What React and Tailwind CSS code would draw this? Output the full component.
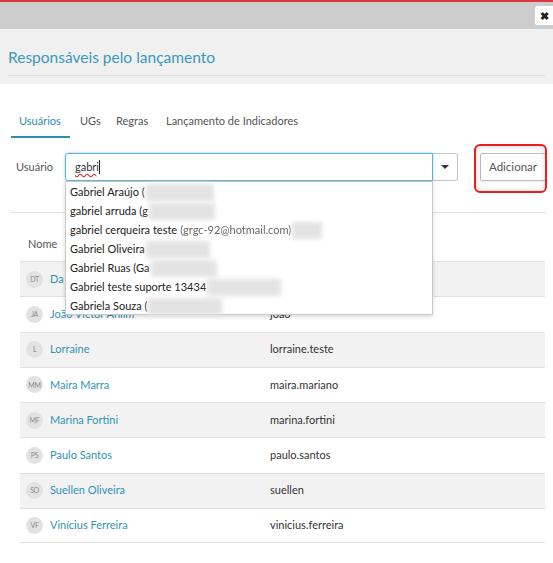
import React from 'react';

const users = [
  { ini: 'DT', name: 'Da', login: '' },
  { ini: 'JA', name: 'João Victor Aniim', login: 'joao' },
  { ini: 'L', name: 'Lorraine', login: 'lorraine.teste' },
  { ini: 'MM', name: 'Maira Marra', login: 'maira.mariano' },
  { ini: 'MF', name: 'Marina Fortini', login: 'marina.fortini' },
  { ini: 'PS', name: 'Paulo Santos', login: 'paulo.santos' },
  { ini: 'SO', name: 'Suellen Oliveira', login: 'suellen' },
  { ini: 'VF', name: 'Vinícius Ferreira', login: 'vinicius.ferreira' },
];

const options = [
  { text: 'Gabriel Araújo (', blur: 'w-[68px]' },
  { text: 'gabriel arruda (g', blur: 'w-[66px]' },
  { text: 'gabriel cerqueira teste', extra: '(grgc-92@hotmail.com)', blur: 'w-[30px]' },
  { text: 'Gabriel Oliveira', blur: 'w-[64px]' },
  { text: 'Gabriel Ruas (Ga', blur: 'w-[66px]' },
  { text: 'Gabriel teste suporte 13434', blur: 'w-[74px]' },
  { text: 'Gabriela Souza (', blur: 'w-[74px]' },
];

export default function App() {
  return (
    <div className="w-[553px] h-[563px] bg-white overflow-hidden text-[#333] font-['Lato','Open_Sans',sans-serif]">
      <div className="h-[2px] bg-[#d9363e]" />
      <div className="h-[27px] bg-[#cccccc] flex justify-end items-start pt-[4px]">
        <button className="w-[18px] h-[19px] bg-white rounded-l-[2px] flex items-center justify-center text-[11px] leading-none text-[#222] font-bold">
          ✖
        </button>
      </div>

      <div className="bg-[#f0f0f0] px-[8px] pt-[16px] h-[55px]">
        <h1 className="text-[15.5px] leading-[24px] text-[#3d98ba] pb-[6px] border-b border-[#dcdcdc] font-normal">
          Responsáveis pelo lançamento
        </h1>
      </div>

      <div className="px-[11px] pt-[28px]">
        <div className="flex text-[11px] leading-[18px] text-[#555]">
          <div className="shrink-0 w-[59px] pl-[8px] pb-[6px] border-b-2 border-[#2e8db3] text-[#2e8db3]">Usuários</div>
          <div className="shrink-0 w-[36px] pl-[10px] pb-[6px]">UGs</div>
          <div className="shrink-0 w-[50px] pl-[10px] pb-[6px]">Regras</div>
          <div className="shrink-0 pl-[10px] pb-[6px]">Lançamento de Indicadores</div>
        </div>

        <div className="flex items-center mt-[15px] h-[28px] relative">
          <span className="shrink-0 ml-[5px] w-[49px] text-[11px] text-[#555]">Usuário</span>
          <div className="relative shrink-0 w-[368px] h-[28px]">
            <div className="h-full border border-[#5fb4d6] rounded-l-[3px] shadow-[0_0_3px_rgba(102,175,233,0.7)] flex items-center pl-[9px] text-[11px]">
              <span className="underline decoration-wavy decoration-[#e02020] underline-offset-2">gabr</span>
              <span>i</span>
              <span className="w-px h-[14px] bg-[#222]" />
            </div>
            <div className="absolute left-0 top-[28px] w-[368px] h-[134px] bg-white border border-[#c8c8c8] shadow-[0_2px_4px_rgba(0,0,0,0.15)] z-10 pl-[4px] pt-[1px]">
              {options.map((o, i) => (
                <div key={i} className="h-[19px] flex items-center text-[11px] text-[#222] whitespace-nowrap">
                  <span>{o.text}</span>
                  {o.extra && <span className="ml-[3px] blur-[0.7px] text-[#666]">{o.extra}</span>}
                  <span className={`${o.blur} h-[17px] bg-[#e3e3e3] blur-[2px] ml-[1px]`} />
                </div>
              ))}
            </div>
          </div>
          <button className="shrink-0 w-[25px] h-[28px] border border-l-0 border-[#c6c6c6] rounded-r-[3px] bg-white flex items-center justify-center">
            <span className="w-0 h-0 border-l-[4px] border-r-[4px] border-t-[4px] border-l-transparent border-r-transparent border-t-[#333]" />
          </button>
          <button className="shrink-0 ml-[22px] w-[66px] h-[28px] border border-[#bdbdbd] rounded-[2px] bg-white text-[11.5px] text-[#555] shadow-[0_1px_2px_rgba(0,0,0,0.08)]">
            Adicionar
          </button>
          <div className="absolute left-[463px] top-[-9px] w-[73px] h-[49px] border-2 border-[#ee1c1c] rounded-[6px] shadow-[inset_0_0_6px_rgba(0,0,0,0.15)] pointer-events-none" />
        </div>

        <div className="mt-[31px] border-t border-[#e2e2e2] mr-[-4px] ml-[-1px]" />

        <div className="ml-[9px] mr-[-3px]">
          <div className="h-[48px] flex items-end pb-[9px] pl-[8px] text-[11px] text-[#555]">Nome</div>
          {users.map((u, i) => (
            <div
              key={u.ini}
              className={`h-[35.25px] flex items-center border-t border-[#e0e0e0] last:border-b ${i % 2 === 0 ? 'bg-[#f2f2f2]' : 'bg-white'}`}
            >
              <div className="shrink-0 ml-[6px] w-[17px] h-[17px] rounded-full bg-[#e2e2e2] flex items-center justify-center text-[7px] text-[#8a8a8a] tracking-tighter">
                {u.ini}
              </div>
              <span className="shrink-0 ml-[7px] w-[220px] text-[11px] text-[#3092b8]">{u.name}</span>
              <span className="text-[11px] text-[#333]">{u.login}</span>
            </div>
          ))}
        </div>
      </div>
    </div>
  );
}
